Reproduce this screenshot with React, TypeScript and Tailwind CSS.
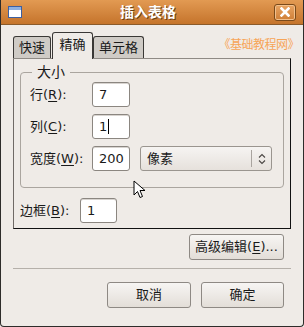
import React from 'react';

const FONT = "font-['DejaVu_Sans','Noto_Sans_CJK_SC',sans-serif]";

function Accel({ text, k }: { text: string; k: string }) {
    return (
        <span>
            {text}(<span className="underline underline-offset-2">{k}</span>):
        </span>
    );
}

function Field({ value, width = 'w-[38px]', caret = false }: { value: string; width?: string; caret?: boolean }) {
    return (
        <div
            className={`flex h-[25px] ${width} items-center rounded-[3px] border border-[#8b8680] bg-white pl-[6px] text-[13px] text-[#1a1a1a] shadow-[inset_0_1px_0_#d8d4d0]`}
        >
            {value}
            {caret && <span className="ml-[1px] h-[15px] w-[1px] bg-black" />}
        </div>
    );
}

function Button({ label, className = '' }: { label: React.ReactNode; className?: string }) {
    return (
        <div
            className={`flex h-[26px] items-center justify-center rounded-[3px] border border-[#8e8984] bg-gradient-to-b from-[#f7f5f3] to-[#e3ded8] text-[13px] text-[#1a1a1a] ${className}`}
        >
            {label}
        </div>
    );
}

export default function App() {
    return (
        <div className={`${FONT} h-[327px] w-[304px] overflow-hidden bg-[#efebe7]`}>
            <div className="flex h-[327px] flex-col rounded-b-[4px] border-x border-b border-[#2e2c2a] bg-[#efebe7]">
                {/* title bar */}
                <div className="flex h-[25px] items-center border-b border-[#8a5a2a] bg-gradient-to-b from-[#e29a52] to-[#c5742b] px-[7px]">
                    <div className="h-[12px] w-[14px] border border-[#3d5fa0] bg-white shadow-[inset_0_3px_0_#8fb0e0]" />
                    <div className="flex-1 text-center text-[14px] font-bold text-white [text-shadow:1px_1px_0_#6b3e12]">
                        插入表格
                    </div>
                    <div className="flex h-[17px] w-[22px] items-center justify-center rounded-[3px] border border-[#7a4a1a] bg-gradient-to-b from-[#e8a462] to-[#cf7f36] shadow-[inset_0_0_0_1px_#f2c08c]">
                        <svg width="10" height="10" viewBox="0 0 10 10">
                            <path d="M1.5 1.5 L8.5 8.5 M8.5 1.5 L1.5 8.5" stroke="#fff" strokeWidth="2.6" strokeLinecap="square" />
                        </svg>
                    </div>
                </div>

                {/* tabs */}
                <div className="flex items-end pl-[12px] pr-[4px] pt-[7px]">
                    <div className="flex h-[22px] w-[38px] items-center justify-center rounded-t-[3px] border-x border-t border-[#3a3836] bg-[#cfcbc6] text-[13px] text-[#1a1a1a]">
                        快速
                    </div>
                    <div className="relative z-10 -mb-[1px] ml-[1px] flex h-[27px] w-[41px] items-center justify-center rounded-t-[3px] border-x border-t border-[#3a3836] bg-[#efebe7] pb-[2px] text-[13px] text-[#1a1a1a]">
                        精确
                    </div>
                    <div className="flex h-[22px] w-[51px] items-center justify-center rounded-t-[3px] border-x border-t border-[#3a3836] bg-[#cfcbc6] text-[13px] text-[#1a1a1a]">
                        单元格
                    </div>
                    <div className="flex-1 pb-[4px] text-right text-[12px] tracking-[-0.5px] text-[#f7a557]">《基础教程网》</div>
                </div>

                {/* notebook page */}
                <div className="mx-[12px] h-[171px] border border-t-[#8f8a85] border-l-[#6f6a66] border-r-[#111] border-b-[#111] bg-[#efebe7] px-[6px] pt-[5px]">
                    <fieldset className="h-[124px] rounded-[4px] border border-[#aaa59f] pl-[9px]">
                        <legend className="ml-[2px] px-[5px] text-[14px] leading-[16px] text-[#1a1a1a]">大小</legend>
                        <div className="mt-[2px] flex flex-col gap-[7px] text-[13px] text-[#1a1a1a]">
                            <div className="flex items-center">
                                <div className="w-[62px]">
                                    <Accel text="行" k="R" />
                                </div>
                                <Field value="7" />
                            </div>
                            <div className="flex items-center">
                                <div className="w-[62px]">
                                    <Accel text="列" k="C" />
                                </div>
                                <Field value="1" caret />
                            </div>
                            <div className="flex items-center">
                                <div className="w-[62px]">
                                    <Accel text="宽度" k="W" />
                                </div>
                                <Field value="200" />
                                <div className="ml-[10px] flex h-[25px] w-[132px] items-center rounded-[3px] border border-[#9a958f] bg-gradient-to-b from-[#f6f4f2] to-[#e6e1dc]">
                                    <span className="flex-1 pl-[6px]">像素</span>
                                    <div className="flex h-[17px] w-[20px] items-center justify-center border-l border-[#a9a49f]">
                                        <svg width="8" height="12" viewBox="0 0 8 12">
                                            <path d="M1 4.5 L4 1.5 L7 4.5 M1 7.5 L4 10.5 L7 7.5" fill="none" stroke="#4a4744" strokeWidth="1.1" />
                                        </svg>
                                    </div>
                                </div>
                            </div>
                        </div>
                    </fieldset>
                    <div className="mt-[10px] flex items-center text-[13px] text-[#1a1a1a]">
                        <div className="w-[60px]">
                            <Accel text="边框" k="B" />
                        </div>
                        <Field value="1" width="w-[37px]" />
                    </div>
                </div>

                {/* cursor */}
                <div className="relative">
                    <svg className="absolute left-[132px] top-[-49px]" width="15" height="19" viewBox="0 0 15 19">
                        <path d="M1 1 L1 15 L4.5 11.5 L7 17.5 L9.5 16.5 L7 10.5 L12 10.5 Z" fill="#fff" stroke="#000" strokeWidth="1" strokeLinejoin="round" />
                    </svg>
                </div>

                <div className="mt-[5px] flex justify-end pr-[19px]">
                    <Button className="w-[95px]" label={<span>高级编辑(<span className="underline underline-offset-2">E</span>)...</span>} />
                </div>
                <div className="mx-[12px] mt-[8px] h-[1px] bg-[#b5b0aa]" />
                <div className="mt-[13px] flex justify-end gap-[10px] pr-[19px]">
                    <Button className="w-[84px]" label="取消" />
                    <Button className="w-[83px]" label="确定" />
                </div>
            </div>
        </div>
    );
}
